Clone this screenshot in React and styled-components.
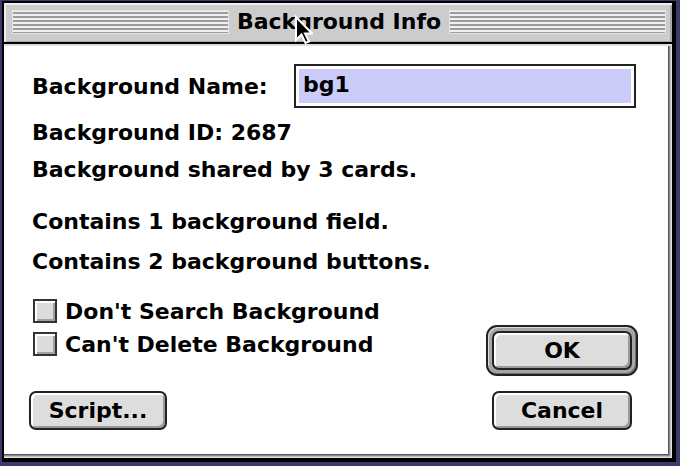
import styled, { createGlobalStyle } from 'styled-components';

const GlobalStyle = createGlobalStyle`
  html, body {
    margin: 0;
    padding: 0;
    background: #3b3b6b;
  }
  * {
    box-sizing: border-box;
  }
`;

const Screen = styled.div`
  width: 680px;
  height: 466px;
  padding: 1px 4px 4px 2px;
  background: #3b3b6b;
  font-family: "DejaVu Sans", "Liberation Sans", sans-serif;
  font-weight: bold;
  font-size: 22px;
  color: #000;
`;

const Window = styled.div`
  position: relative;
  display: flex;
  flex-direction: column;
  height: 100%;
  border-style: solid;
  border-color: #000;
  border-width: 2px 4px 4px 2px;
  background: #fff;
`;

const TitleBar = styled.div`
  display: flex;
  align-items: center;
  gap: 8px;
  height: 41px;
  padding: 7px 6px 8px 8px;
  background: #cccccc;
  border-bottom: 2px solid #000;
  box-shadow: inset 2px 2px 0 #eeeeee, inset -2px -1px 0 #a8a8a8;
`;

const Stripes = styled.div`
  flex: 1;
  height: 24px;
  background: repeating-linear-gradient(
    to bottom,
    #f0f0f0 0 2px,
    #9c9c9c 2px 4px
  );
  box-shadow: inset 0 0 0 1px #e4e4e4;
`;

const Title = styled.div`
  line-height: 26px;
  white-space: nowrap;
`;

const Cursor = styled.svg`
  position: absolute;
  left: 289px;
  top: 12px;
`;

const Body = styled.div`
  flex: 1;
  display: flex;
  flex-direction: column;
  padding: 20px 34px 0 28px;
  box-shadow: inset 0 2px 0 #dddddd, inset -1px -1px 0 #e2e2e2,
    inset -2px -2px 0 #bdbdbd, inset -3px -3px 0 #8a8a8a,
    inset -4px -4px 0 #555555;
`;

const NameRow = styled.div`
  display: flex;
  align-items: center;
  justify-content: space-between;
  height: 44px;
  padding-right: 2px;
`;

const NameField = styled.div`
  width: 342px;
  height: 44px;
  border: 2px solid #222;
  padding: 3px;
  background: #fff;
`;

const NameFill = styled.div`
  height: 100%;
  background: #ccccf8;
  padding-left: 4px;
  line-height: 32px;
`;

const Line = styled.div`
  height: 26px;
  line-height: 26px;
  white-space: nowrap;
  margin-top: ${({ gap }) => gap}px;
`;

const Bottom = styled.div`
  display: grid;
  grid-template-columns: 1fr 152px;
  row-gap: 15px;
  margin-top: 22px;
`;

const Checks = styled.div`
  display: flex;
  flex-direction: column;
  gap: 5px;
`;

const CheckRow = styled.label`
  display: flex;
  align-items: center;
  gap: 8px;
  height: 28px;
  padding-left: 1px;
  white-space: nowrap;
`;

const Box = styled.span`
  width: 24px;
  height: 24px;
  border: 2px solid #333;
  background: #dcdcdc;
  box-shadow: inset 2px 2px 0 #fff, inset -2px -2px 0 #a0a0a0;
`;

const DefaultRing = styled.div`
  margin-top: 28px;
  padding: 4px;
  border: 2px solid #222;
  border-radius: 11px;
  background: #a6a6a6;
  box-shadow: inset 1px 1px 0 #dcdcdc, inset -1px -1px 0 #6e6e6e;
`;

const Button = styled.div`
  display: flex;
  align-items: center;
  justify-content: center;
  width: ${({ w }) => w}px;
  height: 39px;
  margin-left: ${({ shift }) => shift || 0}px;
  justify-self: ${({ align }) => align || 'start'};
  border: 2px solid #222;
  border-radius: 7px;
  background: #dddddd;
  box-shadow: inset 2px 2px 0 #fff, inset -2px -2px 0 #9a9a9a;
  line-height: 1;
`;

export default function App() {
  return (
    <>
      <GlobalStyle />
      <Screen>
        <Window>
          <TitleBar>
            <Stripes />
            <Title>Background Info</Title>
            <Stripes />
          </TitleBar>
          <Cursor width="20" height="30" viewBox="0 0 20 30">
            <path
              d="M3 2 L3 25 L8.5 19.5 L12.5 28 L16 26.5 L12 18.5 L19 18.5 Z"
              fill="#000"
              stroke="#fff"
              strokeWidth="2"
              strokeLinejoin="miter"
            />
          </Cursor>
          <Body>
            <NameRow>
              <span>Background Name:</span>
              <NameField>
                <NameFill>bg1</NameFill>
              </NameField>
            </NameRow>
            <Line gap={12}>Background ID: 2687</Line>
            <Line gap={11}>Background shared by 3 cards.</Line>
            <Line gap={26}>Contains 1 background field.</Line>
            <Line gap={14}>Contains 2 background buttons.</Line>
            <Bottom>
              <Checks>
                <CheckRow>
                  <Box />
                  Don't Search Background
                </CheckRow>
                <CheckRow>
                  <Box />
                  Can't Delete Background
                </CheckRow>
              </Checks>
              <DefaultRing>
                <Button w={140}>OK</Button>
              </DefaultRing>
              <Button w={138} shift={-3}>Script...</Button>
              <Button w={140} align="center">Cancel</Button>
            </Bottom>
          </Body>
        </Window>
      </Screen>
    </>
  );
}
